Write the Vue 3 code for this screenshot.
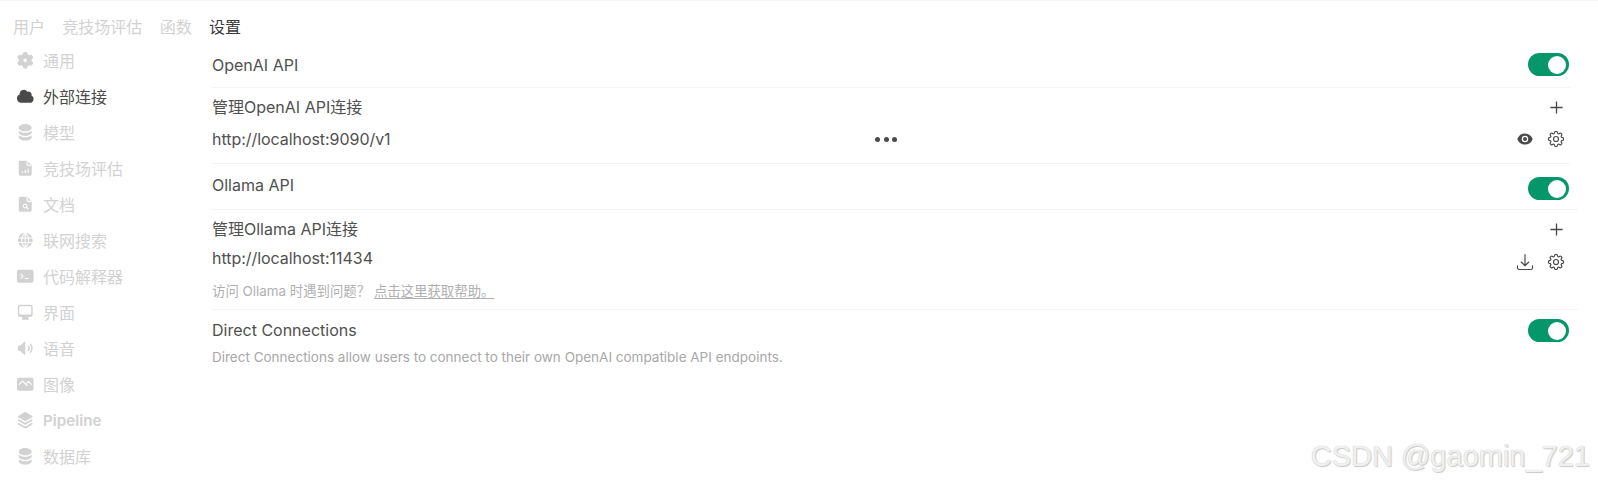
<script setup>
const tabs = [
  { label: '用户' },
  { label: '竞技场评估' },
  { label: '函数' },
  { label: '设置', active: true },
]

const db = 'M10 1c3.866 0 7 1.79 7 4s-3.134 4-7 4-7-1.79-7-4 3.134-4 7-4zm5.694 8.13c.464-.264.91-.583 1.306-.952V10c0 2.21-3.134 4-7 4s-7-1.79-7-4V8.178c.396.37.842.688 1.306.953C5.838 10.006 7.854 10.5 10 10.5s4.162-.494 5.694-1.37zM3 13.179V15c0 2.21 3.134 4 7 4s7-1.79 7-4v-1.822c-.396.37-.842.688-1.306.953-1.532.875-3.548 1.369-5.694 1.369s-4.162-.494-5.694-1.37A7.009 7.009 0 013 13.179z'
const doc = 'M3 3.5A1.5 1.5 0 0 1 4.5 2h6.879a1.5 1.5 0 0 1 1.06.44l4.122 4.12A1.5 1.5 0 0 1 17 7.622V16.5a1.5 1.5 0 0 1-1.5 1.5h-11A1.5 1.5 0 0 1 3 16.5v-13Z'

const menu = [
  { label: '通用', d: ['M7.84 1.804A1 1 0 0 1 8.82 1h2.36a1 1 0 0 1 .98.804l.331 1.652a6.993 6.993 0 0 1 1.929 1.115l1.598-.54a1 1 0 0 1 1.186.447l1.18 2.044a1 1 0 0 1-.205 1.251l-1.267 1.113a7.047 7.047 0 0 1 0 2.228l1.267 1.113a1 1 0 0 1 .206 1.25l-1.18 2.045a1 1 0 0 1-1.187.447l-1.598-.54a6.993 6.993 0 0 1-1.929 1.115l-.33 1.652a1 1 0 0 1-.98.804H8.82a1 1 0 0 1-.98-.804l-.331-1.652a6.993 6.993 0 0 1-1.929-1.115l-1.598.54a1 1 0 0 1-1.186-.447l-1.18-2.044a1 1 0 0 1 .205-1.251l1.267-1.114a7.05 7.05 0 0 1 0-2.227L1.821 7.773a1 1 0 0 1-.206-1.25l1.18-2.045a1 1 0 0 1 1.187-.447l1.598.54A6.992 6.992 0 0 1 7.51 3.456l.33-1.652ZM10 12a2 2 0 1 0 0-4 2 2 0 0 0 0 4Z'] },
  { label: '外部连接', active: true, d: ['M1 12.5A4.5 4.5 0 0 0 5.5 17H15a4 4 0 0 0 1.866-7.539 3.504 3.504 0 0 0-4.504-4.272A4.5 4.5 0 0 0 4.06 8.235 4.502 4.502 0 0 0 1 12.5Z'] },
  { label: '模型', d: [db] },
  { label: '竞技场评估', d: [doc], cut: ['M12 2.5v3.2c0 .7.5 1.2 1.2 1.2h3.3', 'M7 15v-1.5M10 15v-3M13 15v-4.5'] },
  { label: '文档', d: [doc], cut: ['M12 2.5v3.2c0 .7.5 1.2 1.2 1.2h3.3', 'M11.8 13.8 13.4 15.4M11.9 12a2 2 0 1 1-4 0 2 2 0 0 1 4 0Z'] },
  { label: '联网搜索', d: ['M10 18a8 8 0 1 0 0-16 8 8 0 0 0 0 16Z'], cut: ['M2.5 7.5h15M2.5 12.5h15M10 2v16M10 2c-5 4-5 12 0 16M10 2c5 4 5 12 0 16'] },
  { label: '代码解释器', d: ['M3.25 3A2.25 2.25 0 0 0 1 5.25v9.5A2.25 2.25 0 0 0 3.25 17h13.5A2.25 2.25 0 0 0 19 14.75v-9.5A2.25 2.25 0 0 0 16.75 3H3.25Z'], cut: ['M5 7.5 7.5 10 5 12.5M9.5 12.5h4'] },
  { label: '界面', d: ['M2 4.25A2.25 2.25 0 0 1 4.25 2h11.5A2.25 2.25 0 0 1 18 4.25v8.5A2.25 2.25 0 0 1 15.75 15h-3.105a3.501 3.501 0 0 0 1.1 1.677A.75.75 0 0 1 13.26 18H6.74a.75.75 0 0 1-.484-1.323A3.501 3.501 0 0 0 7.355 15H4.25A2.25 2.25 0 0 1 2 12.75v-8.5Zm1.5 0a.75.75 0 0 1 .75-.75h11.5a.75.75 0 0 1 .75.75v7.5a.75.75 0 0 1-.75.75H4.25a.75.75 0 0 1-.75-.75v-7.5Z'] },
  { label: '语音', d: ['M10 3.75a.75.75 0 0 0-1.264-.546L4.703 7H3.167a.75.75 0 0 0-.7.48A6.985 6.985 0 0 0 2 10c0 .887.165 1.737.468 2.52.111.29.39.48.7.48h1.535l4.033 3.796A.75.75 0 0 0 10 16.25V3.75ZM15.95 5.05a.75.75 0 0 0-1.06 1.061 5.5 5.5 0 0 1 0 7.778.75.75 0 0 0 1.06 1.06 7 7 0 0 0 0-9.899Z', 'M13.829 7.172a.75.75 0 0 0-1.061 1.06 2.5 2.5 0 0 1 0 3.536.75.75 0 0 0 1.06 1.06 4 4 0 0 0 0-5.656Z'] },
  { label: '图像', d: ['M3.25 3A2.25 2.25 0 0 0 1 5.25v9.5A2.25 2.25 0 0 0 3.25 17h13.5A2.25 2.25 0 0 0 19 14.75v-9.5A2.25 2.25 0 0 0 16.75 3H3.25Z'], cut: ['M3 10.5 7 6.5l5.5 5.5M11 9.5l2.5-2.5 3.5 3.5'] },
  { label: 'Pipeline', latin: true, d: ['M3.196 12.87l-.825.483a.75.75 0 000 1.294l7.25 4.25a.75.75 0 00.758 0l7.25-4.25a.75.75 0 000-1.294l-.825-.484-5.666 3.322a2.25 2.25 0 01-2.276 0L3.196 12.87z', 'M3.196 8.87l-.825.483a.75.75 0 000 1.294l7.25 4.25a.75.75 0 00.758 0l7.25-4.25a.75.75 0 000-1.294l-.825-.484-5.666 3.322a2.25 2.25 0 01-2.276 0L3.196 8.87z', 'M10.38 1.103a.75.75 0 00-.76 0l-7.25 4.25a.75.75 0 000 1.294l7.25 4.25a.75.75 0 00.76 0l7.25-4.25a.75.75 0 000-1.294l-7.25-4.25z'] },
  { label: '数据库', d: [db] },
]

const gear = 'M10.343 3.94c.09-.542.56-.94 1.11-.94h1.093c.55 0 1.02.398 1.11.94l.149.894c.07.424.384.764.78.93.398.164.855.142 1.205-.108l.737-.527a1.125 1.125 0 0 1 1.45.12l.773.774c.39.389.44 1.002.12 1.45l-.527.737c-.25.35-.272.806-.107 1.204.165.397.505.71.93.78l.893.15c.543.09.94.559.94 1.109v1.094c0 .55-.397 1.02-.94 1.11l-.894.149c-.424.07-.764.383-.929.78-.165.398-.143.854.107 1.204l.527.738c.32.447.269 1.06-.12 1.45l-.774.773a1.125 1.125 0 0 1-1.449.12l-.738-.527c-.35-.25-.806-.272-1.203-.107-.398.165-.71.505-.781.929l-.149.894c-.09.542-.56.94-1.11.94h-1.094c-.55 0-1.019-.398-1.11-.94l-.148-.894c-.071-.424-.384-.764-.781-.93-.398-.164-.854-.142-1.204.108l-.738.527c-.447.32-1.06.269-1.45-.12l-.773-.774a1.125 1.125 0 0 1-.12-1.45l.527-.737c.25-.35.272-.806.108-1.204-.165-.397-.506-.71-.93-.78l-.894-.15c-.542-.09-.94-.56-.94-1.109v-1.094c0-.55.398-1.02.94-1.11l.894-.149c.424-.7.765-.383.93-.78.165-.398.143-.854-.108-1.204l-.526-.738a1.125 1.125 0 0 1 .12-1.45l.773-.773a1.125 1.125 0 0 1 1.45-.12l.737.527c.35.25.807.272 1.204.107.397-.165.71-.505.78-.929l.15-.894ZM15 12a3 3 0 1 1-6 0 3 3 0 0 1 6 0Z'
</script>

<template>
  <div class="page">
    <nav class="tabs">
      <span v-for="t in tabs" :key="t.label" class="tab" :class="{ on: t.active }">{{ t.label }}</span>
    </nav>

    <div class="body">
      <aside class="side">
        <div v-for="m in menu" :key="m.label" class="item" :class="{ on: m.active, latin: m.latin }">
          <svg class="item-icon" viewBox="0 0 20 20">
            <path v-for="d in m.d" :key="d" :d="d" fill="currentColor" fill-rule="evenodd" />
            <path v-for="d in m.cut" :key="d" :d="d" fill="none" stroke="#fff" stroke-width="1.2" />
          </svg>
          <span>{{ m.label }}</span>
        </div>
      </aside>

      <main class="main">
        <section class="row title-row line">
          <span>OpenAI API</span>
          <span class="toggle"><i></i></span>
        </section>

        <section class="group line openai">
          <div class="head">
            <span>管理OpenAI API连接</span>
            <svg class="plus" viewBox="0 0 16 16"><path d="M8 1.5v13M1.5 8h13" /></svg>
          </div>
          <div class="url">
            <span class="url-text">http://localhost:9090/v1</span>
            <span class="dots"><i></i><i></i><i></i></span>
            <span class="tools">
              <svg class="tool eye" viewBox="0 0 20 20">
                <path d="M10 12.5a2.5 2.5 0 1 0 0-5 2.5 2.5 0 0 0 0 5Z" fill="#4a4a4a" />
                <path d="M.664 10.59a1.651 1.651 0 0 1 0-1.186A10.004 10.004 0 0 1 10 3c4.257 0 7.893 2.66 9.336 6.41.147.381.146.804 0 1.186A10.004 10.004 0 0 1 10 17c-4.257 0-7.893-2.66-9.336-6.41ZM14 10a4 4 0 1 1-8 0 4 4 0 0 1 8 0Z" fill="#4a4a4a" fill-rule="evenodd" />
              </svg>
              <svg class="tool" viewBox="0 0 24 24"><path :d="gear" class="stroke" /></svg>
            </span>
          </div>
        </section>

        <section class="row title-row line wide ollama-title">
          <span>Ollama API</span>
          <span class="toggle low"><i></i></span>
        </section>

        <section class="group line wide ollama">
          <div class="head">
            <span>管理Ollama API连接</span>
            <svg class="plus" viewBox="0 0 16 16"><path d="M8 1.5v13M1.5 8h13" /></svg>
          </div>
          <div class="url">
            <span class="url-text">http://localhost:11434</span>
            <span class="tools">
              <svg class="tool" viewBox="0 0 24 24"><path d="M3 16.5v2.25A2.25 2.25 0 0 0 5.25 21h13.5A2.25 2.25 0 0 0 21 18.75V16.5M16.5 12 12 16.5m0 0L7.5 12m4.5 4.5V3" class="stroke" /></svg>
              <svg class="tool" viewBox="0 0 24 24"><path :d="gear" class="stroke" /></svg>
            </span>
          </div>
          <p class="hint">访问 Ollama 时遇到问题？ <a class="help">点击这里获取帮助。</a></p>
        </section>

        <section class="direct">
          <div class="row">
            <span class="direct-title">Direct Connections</span>
            <span class="toggle"><i></i></span>
          </div>
          <p class="note">Direct Connections allow users to connect to their own OpenAI compatible API endpoints.</p>
        </section>
      </main>
    </div>

    <div class="mark">CSDN @gaomin_721</div>
  </div>
</template>

<style>
html, body { background: #fff; }
</style>

<style scoped>
.page {
  position: relative;
  width: 1598px;
  height: 484px;
  overflow: hidden;
  box-sizing: border-box;
  border-top: 1px solid #f6f6f6;
  background: #fff;
  color: #505050;
  font-family: Inter, "Noto Sans CJK SC", sans-serif;
  font-size: 16px;
}

.tabs {
  display: flex;
  gap: 17.3px;
  height: 41px;
  padding: 8px 0 0 13px;
  align-items: center;
  box-sizing: border-box;
}
.tab { color: #d2d2d2; }
.tab.on { color: #3a3a3a; }

.body {
  display: flex;
}

.side {
  width: 212px;
  flex: none;
}
.item {
  display: flex;
  align-items: center;
  height: 36px;
  padding-left: 16px;
  gap: 8.5px;
  color: #d2d2d2;
}
.item.on { color: #4a4a4a; }
.item.latin { font-weight: 600; font-size: 15.2px; }
.item-icon { width: 18.5px; height: 18.5px; flex: none; }

.main {
  width: 1366px;
  flex: none;
}

.row {
  display: flex;
  align-items: center;
  justify-content: space-between;
}
.title-row {
  height: 45px;
}
.ollama-title {
  height: 42px;
  padding-bottom: 3px;
}
.line {
  margin-right: 8px;
  border-bottom: 1px solid #f4f4f4;
}
.line.wide { margin-right: 0; padding-right: 8px; }

.toggle {
  display: flex;
  align-items: center;
  justify-content: flex-end;
  width: 41px;
  height: 23px;
  margin-right: 1px;
  padding-right: 3px;
  box-sizing: border-box;
  border-radius: 12px;
  background: #059669;
}
.toggle.low { margin-top: 7px; }
.toggle i {
  display: block;
  width: 18px;
  height: 18px;
  border-radius: 50%;
  background: #fff;
}

.openai { height: 75px; }
.ollama { height: 99px; }

.head {
  display: flex;
  align-items: center;
  justify-content: space-between;
  height: 36px;
  margin-bottom: 2px;
}
.ollama .head { height: 35px; margin-bottom: 4px; }
.plus {
  width: 15px;
  height: 15px;
  margin: 2px 6.5px 0 0;
  fill: none;
  stroke: #4a4a4a;
  stroke-width: 1.4;
}
.ollama .plus { margin-top: 4px; }
.url {
  position: relative;
  display: flex;
  align-items: center;
  justify-content: space-between;
  height: 26px;
}
.url-text { letter-spacing: -0.05px; }
.ollama .url { height: 18px; }
.ollama .tools { margin-top: 8px; }
.dots {
  position: absolute;
  left: 663px;
  top: 11px;
  display: flex;
  gap: 3.5px;
}
.dots i {
  width: 5px;
  height: 5px;
  border-radius: 50%;
  background: #4a4a4a;
}
.tools {
  display: flex;
  align-items: center;
  gap: 11px;
  margin-right: 4px;
}
.tool {
  width: 20px;
  height: 20px;
}
.tool.eye {
  width: 16px;
  height: 16px;
  margin: 0 2px;
}
.stroke {
  fill: none;
  stroke: #4a4a4a;
  stroke-width: 1.4;
  stroke-linecap: round;
  stroke-linejoin: round;
}
.hint {
  margin: 16px 0 0;
  font-size: 13.4px;
  line-height: 16px;
  color: #b0b0b0;
}
.help {
  text-decoration: underline;
  text-underline-offset: 2px;
}

.direct { padding-top: 9px; }
.direct .row { padding-right: 8px; }
.direct-title { margin-bottom: 2px; }
.note {
  margin: 7px 0 0;
  font-size: 13.5px;
  line-height: 17px;
  color: #a8a8a8;
}

.mark {
  position: absolute;
  right: 8px;
  bottom: 11px;
  font-family: "Liberation Sans", sans-serif;
  font-size: 29px;
  color: #f0f0f0;
  text-shadow: 0 0 1px #bbb, 1px 1px 1px #ccc;
}
</style>
